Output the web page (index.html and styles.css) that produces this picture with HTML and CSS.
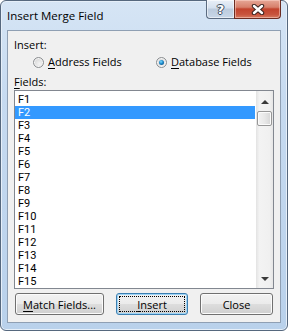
FILE: index.html
```html
<!DOCTYPE html>
<html lang="en">
<head>
    <meta charset="UTF-8">
    <meta name="viewport" content="width=device-width, initial-scale=1.0">
    <title>Insert Merge Field</title>
    <link rel="stylesheet" href="styles.css">
</head>
<body>
    <div class="window">
        <div class="titlebar">
            <span class="title">Insert Merge Field</span>
            <div class="caption-buttons">
                <span class="cap-btn help">?</span>
                <span class="cap-btn close">
                    <svg viewBox="0 0 14 11" width="14" height="11">
                        <path d="M3 2 L11 9 M11 2 L3 9" stroke="#3b2420" stroke-width="4.4" stroke-linecap="round"/>
                        <path d="M3 2 L11 9 M11 2 L3 9" stroke="#ffffff" stroke-width="2.4" stroke-linecap="round"/>
                    </svg>
                </span>
            </div>
        </div>
        <div class="client">
            <div class="label">Insert:</div>
            <div class="radios">
                <label class="option wide"><span class="radio"></span><span><u>A</u>ddress Fields</span></label>
                <label class="option"><span class="radio checked"></span><span><u>D</u>atabase Fields</span></label>
            </div>
            <div class="label fields-label"><u>F</u>ields:</div>
            <div class="listbox">
                <ul class="items">
                    <li>F1</li>
                    <li class="selected">F2</li>
                    <li>F3</li>
                    <li>F4</li>
                    <li>F5</li>
                    <li>F6</li>
                    <li>F7</li>
                    <li>F8</li>
                    <li>F9</li>
                    <li>F10</li>
                    <li>F11</li>
                    <li>F12</li>
                    <li>F13</li>
                    <li>F14</li>
                    <li>F15</li>
                </ul>
                <div class="scrollbar">
                    <span class="arrow-box"><span class="arrow up"></span></span>
                    <span class="thumb"></span>
                    <span class="track"></span>
                    <span class="arrow-box bottom"><span class="arrow down"></span></span>
                </div>
            </div>
            <div class="buttons">
                <button class="btn match"><u>M</u>atch Fields...</button>
                <button class="btn default"><span class="focus"><u>I</u>nsert</span></button>
                <button class="btn closebtn">Close</button>
            </div>
        </div>
    </div>
</body>
</html>
```

FILE: styles.css
```css
body, html {
    margin: 0;
    background: #ffffff;
}

.window {
    width: 288px;
    height: 331px;
    box-sizing: border-box;
    border: 1px solid #56687e;
    border-radius: 6px;
    background: linear-gradient(180deg, #d6e5f5 0%, #c6daf0 30%, #b9d1eb 100%);
    box-shadow: inset 0 0 0 1px #e6eff9;
    display: flex;
    flex-direction: column;
    font-family: 'Open Sans', 'Noto Sans', sans-serif;
    font-size: 11px;
    color: #000;
}

.titlebar {
    height: 29px;
    display: flex;
    align-items: flex-start;
}

.title {
    margin: 7px 0 0 6px;
    font-size: 11.5px;
    line-height: 15px;
    color: #000;
}

.caption-buttons {
    margin: -1px 6px 0 auto;
    display: flex;
}

.cap-btn {
    height: 19px;
    display: flex;
    align-items: center;
    justify-content: center;
    box-sizing: border-box;
    border: 1px solid #5b6b80;
    border-top: none;
}

.help {
    width: 28px;
    border-radius: 0 0 0 4px;
    border-right: none;
    background: linear-gradient(180deg, #e9eff7 0%, #d4e0ee 45%, #bccbdd 50%, #c8d7e8 100%);
    box-shadow: inset 0 0 0 1px rgba(255,255,255,0.55);
    font-family: 'DejaVu Sans', sans-serif;
    font-weight: bold;
    font-size: 13px;
    color: #ffffff;
    text-shadow: 1px 0 0 #3c4a5c, -1px 0 0 #3c4a5c, 0 1px 0 #3c4a5c, 0 -1px 0 #3c4a5c;
}

.close {
    width: 47px;
    border-radius: 0 0 4px 0;
    border-color: #6b2c22;
    background: linear-gradient(180deg, #e6a797 0%, #d7806b 40%, #c2432d 50%, #c8543d 80%, #d57a60 100%);
    box-shadow: inset 0 0 0 1px rgba(255,220,210,0.5);
}

.client {
    flex: 1;
    margin: 0 6px 7px 6px;
    border: 1px solid #8f9fb3;
    background: #f0f0f0;
    padding: 6px 6px 0 6px;
    display: flex;
    flex-direction: column;
}

.label {
    height: 15px;
    line-height: 15px;
}

.fields-label {
    margin-top: 5px;
}

u {
    text-decoration-thickness: 1px;
    text-underline-offset: 2px;
}

.radios {
    margin-top: 3px;
    height: 14px;
    padding-left: 19px;
    display: flex;
    align-items: center;
}

.option {
    display: flex;
    align-items: center;
    gap: 4px;
    line-height: 14px;
}

.option.wide {
    width: 123px;
}

.radio {
    width: 11px;
    height: 11px;
    border-radius: 50%;
    border: 1px solid #8b8e91;
    box-sizing: border-box;
    background: radial-gradient(circle at 60% 65%, #f4f4f4 0%, #dcdcdc 60%, #c8c8c8 100%);
    box-shadow: inset 0 0 0 1px #f6f6f6;
    position: relative;
}

.radio.checked::after {
    content: '';
    position: absolute;
    left: 2px;
    top: 2px;
    width: 5px;
    height: 5px;
    border-radius: 50%;
    background: radial-gradient(circle at 40% 35%, #7ddcff 0%, #1a88c9 45%, #0d3f6f 100%);
}

.listbox {
    margin-top: 1px;
    height: 199px;
    box-sizing: border-box;
    border: 1px solid #828790;
    background: #ffffff;
    display: flex;
    overflow: hidden;
}

.items {
    flex: 1;
    margin: 0;
    padding: 2px 1px 0 0;
    list-style: none;
    font-family: Roboto, 'Liberation Sans', sans-serif;
    font-size: 11px;
}

.items li {
    height: 13px;
    line-height: 13px;
    padding-left: 3px;
}

.items li.selected {
    background: #3399ff;
    color: #ffffff;
}

.scrollbar {
    width: 17px;
    display: flex;
    flex-direction: column;
    background: linear-gradient(90deg, #e3e3e3 0%, #f3f3f3 20%, #f0f0f0 80%, #e6e6e6 100%);
}

.arrow-box {
    height: 20px;
    display: flex;
    align-items: center;
    justify-content: center;
}

.arrow-box.bottom {
    height: 18px;
}

.arrow {
    width: 0;
    height: 0;
    border-left: 4px solid transparent;
    border-right: 4px solid transparent;
}

.arrow.up {
    border-bottom: 4px solid #3a3a3a;
    margin-top: 2px;
}

.arrow.down {
    border-top: 4px solid #3a3a3a;
    margin-bottom: 1px;
}

.thumb {
    height: 15px;
    margin-left: 1px;
    width: 15px;
    box-sizing: border-box;
    border: 1px solid #979797;
    border-radius: 2px;
    background: linear-gradient(90deg, #f3f3f3 0%, #e8e8e8 50%, #d6d6d6 100%);
    box-shadow: inset 0 0 0 1px #fbfbfb;
}

.track {
    flex: 1;
}

.buttons {
    margin-top: 4px;
    padding-left: 1px;
    display: flex;
    gap: 12px;
}

.btn {
    height: 22px;
    padding: 0;
    box-sizing: border-box;
    border: 1px solid #707070;
    border-radius: 3px;
    background: linear-gradient(180deg, #f2f2f2 0%, #ebebeb 48%, #dddddd 52%, #cfcfcf 100%);
    box-shadow: inset 0 0 0 1px #fbfbfb;
    font-family: 'Open Sans', 'Noto Sans', sans-serif;
    font-size: 11px;
    color: #000;
}

.match {
    width: 89px;
}

.default {
    width: 72px;
    border-color: #3c7fb1;
    box-shadow: inset 0 0 0 1px #9fd5f7;
    display: flex;
    padding: 2px;
}

.focus {
    flex: 1;
    border: 1px dotted #000;
    display: flex;
    align-items: center;
    justify-content: center;
}

.closebtn {
    width: 73px;
}
```
